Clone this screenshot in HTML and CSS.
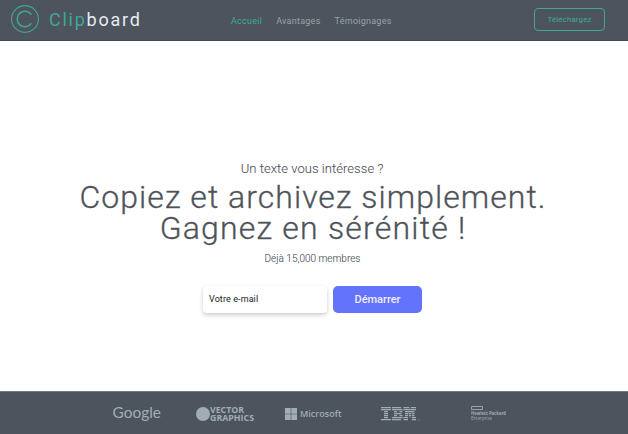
FILE: index.html
```html
<!DOCTYPE html>
<html lang="fr">
<head>
<meta charset="utf-8">
<title>Clipboard</title>
<link rel="stylesheet" href="styles.css">
</head>
<body>
<header class="header">
  <a class="brand">
    <svg class="brand-mark" viewBox="0 0 30 30" fill="none" stroke="currentColor">
      <circle cx="15" cy="15" r="13.4" stroke-width="1.1"/>
      <path d="M21.4 10.6A7.8 7.8 0 1 0 21.4 19.4" stroke-width="1.5"/>
    </svg>
    <span class="brand-name"><span class="brand-accent">Clip</span>board</span>
  </a>
  <nav class="nav">
    <a class="nav-link active">Accueil</a>
    <a class="nav-link">Avantages</a>
    <a class="nav-link">Témoignages</a>
  </nav>
  <a class="download">Téléchargez</a>
</header>
<main class="hero">
  <p class="intro">Un texte vous intéresse ?</p>
  <h1 class="title"><span class="line-one">Copiez et archivez simplement.</span><br><span class="line-two">Gagnez en sérénité !</span></h1>
  <p class="members">Déjà 15,000 membres</p>
  <form class="signup">
    <label class="email">Votre e-mail</label>
    <button class="start" type="button">Démarrer</button>
  </form>
</main>
<footer class="partners">
  <svg class="google" width="50" height="22" viewBox="0 0 50 22"><text x="0.5" y="15" textLength="48.5" lengthAdjust="spacingAndGlyphs">Google</text></svg>
  <svg class="vector" width="59" height="20" viewBox="0 0 59 20"><circle cx="7" cy="10" r="7"/><text x="14" y="9" textLength="34" lengthAdjust="spacingAndGlyphs">VECTOR</text><text x="14" y="16.5" textLength="44" lengthAdjust="spacingAndGlyphs">GRAPHICS</text></svg>
  <svg class="microsoft" width="58" height="20" viewBox="0 0 58 20"><path d="M0 4h5.7v5.7H0zM6.3 4H12v5.7H6.3zM0 10.3h5.7V16H0zM6.3 10.3H12V16H6.3z"/><text x="15" y="13.3" textLength="41.5" lengthAdjust="spacingAndGlyphs">Microsoft</text></svg>
  <svg class="ibm" width="40" height="20" viewBox="0 0 40 20">
    <path d="M0 3h10v1.2H0zM0 5h10v1.2H0zM3 7h4v1.2H3zM3 9h4v1.2H3zM3 11h4v1.2H3zM3 13h4v1.2H3zM0 15h10v1.2H0z"/>
    <path d="M11 3h9v1.2h-9zM11 5h10.5v1.2H11zM13 7h3v1.2h-3zM18.5 7h3v1.2h-3zM13 9h7.5v1.2H13zM13 11h3v1.2h-3zM18.5 11h3v1.2h-3zM11 13h10.5v1.2H11zM11 15h9v1.2h-9z"/>
    <path d="M22.5 3h5.5l.5 1.2h-6zM35 3h-5l-.5 1.2H35zM22.5 5h6.4l.4 1.2h-6.8zM35 5h-5.6L29 6.2h6zM24 7h9.5v1.2H24zM24 9h3v1.2h-3zM27.6 9h2.6v1.2h-2.6zM30.8 9h2.7v1.2h-2.7zM24 11h3v1.2h-3zM28 11h2v1.2h-2zM30.8 11h2.7v1.2h-2.7zM22.5 13H27v1.2h-4.5zM28.5 13h1l-.5 1.2zM30.8 13H35v1.2h-4.2zM22.5 15H27v1.2h-4.5zM30.8 15H35v1.2h-4.2zM37.5 15.5h1v.7h-1z"/>
  </svg>
  <svg class="hpe" width="36" height="20" viewBox="0 0 36 20"><path class="hpe-frame" d="M.5 2.5h11v3H.5z"/><text class="hpe-bold" x="0" y="11.3" textLength="35" lengthAdjust="spacingAndGlyphs">Hewlett Packard</text><text x="0" y="16" textLength="21" lengthAdjust="spacingAndGlyphs">Enterprise</text></svg>
</footer>
</body>
</html>
```
FILE: styles.css
```css
* { box-sizing: border-box; }
body {
  margin: 0;
  height: 434px;
  display: flex;
  flex-direction: column;
  font-family: Roboto, "Liberation Sans", sans-serif;
  color: #4e535a;
  background: #fff;
  overflow: hidden;
}
.header {
  height: 41px;
  flex: none;
  display: grid;
  grid-template-columns: 231px 1fr 71px;
  padding: 0 23px 2px 0;
  align-items: center;
  background: #4d545d;
  border-bottom: 1px solid #434a53;
}
.brand { display: flex; align-items: center; padding-left: 10px; color: #3fa796; }
.brand-mark { width: 30px; height: 30px; }
.brand-name { margin-left: 9px; padding-top: 1px; font-size: 18px; line-height: 22px; letter-spacing: 1.75px; color: #e8ebf2; }
.brand-accent { color: #3fa796; }
.nav { display: flex; gap: 14px; font-size: 9px; line-height: 12px; letter-spacing: .25px; color: #9aa2ab; padding-top: 3px; }
.active { color: #35ae99; }
.download {
  height: 23px;
  border: 1px solid #3fa796;
  border-radius: 4px;
  font-size: 8px;
  letter-spacing: .1px;
  line-height: 22px;
  text-align: center;
  color: #3fa796;
}
.hero { flex: 1; text-align: center; padding-top: 119px; }
.intro, .title, .members { margin: 0; }
.intro { font-size: 13px; line-height: 18px; font-weight: 300; letter-spacing: .05px; padding: 0 4px 0 0; -webkit-text-stroke: .1px; }
.title { font-size: 32px; line-height: 31px; font-weight: 300; letter-spacing: 1.2px; padding: 4px 2px 0 0; white-space: nowrap; -webkit-text-stroke: .3px; }
.line-one { letter-spacing: 1.03px; }
.members { font-size: 10px; line-height: 14px; font-weight: 300; padding: 8px 3px 0 0; -webkit-text-stroke: .1px; }
.signup { display: flex; gap: 6px; margin: 20px 0 0 203px; }
.email {
  width: 124px;
  height: 27px;
  padding-left: 6px;
  border-radius: 4px;
  box-shadow: 0 2px 4px #0003;
  font-size: 9px;
  letter-spacing: .1px;
  line-height: 27px;
  text-align: left;
  color: #222;
}
.start {
  width: 89px;
  height: 27px;
  border: 0;
  border-radius: 5px;
  padding: 0 0 1px;
  background: #6373fb;
  color: #eef0ff;
  font: 500 11px Roboto, sans-serif;
}
.partners {
  height: 43px;
  flex: none;
  display: flex;
  align-items: center;
  padding: 1px 0 0 112px;
  background: #4d545d;
  border-top: 1px solid #747b83;
}
.partners svg { fill: #a1acb6; flex: none; overflow: visible; }
.google { font: 400 15px Lato, sans-serif; }
.vector { margin-left: 34px; font: 700 8px "Open Sans", sans-serif; }
.microsoft { margin-left: 30px; font: 600 9px "Open Sans", sans-serif; }
.ibm { margin-left: 38px; }
.hpe { margin-left: 50px; font: 400 4.8px "Open Sans", sans-serif; }
.hpe-bold { font-weight: 700; }
.partners .hpe-frame { fill: none; stroke: #a1acb6; stroke-width: .9px; }
```
